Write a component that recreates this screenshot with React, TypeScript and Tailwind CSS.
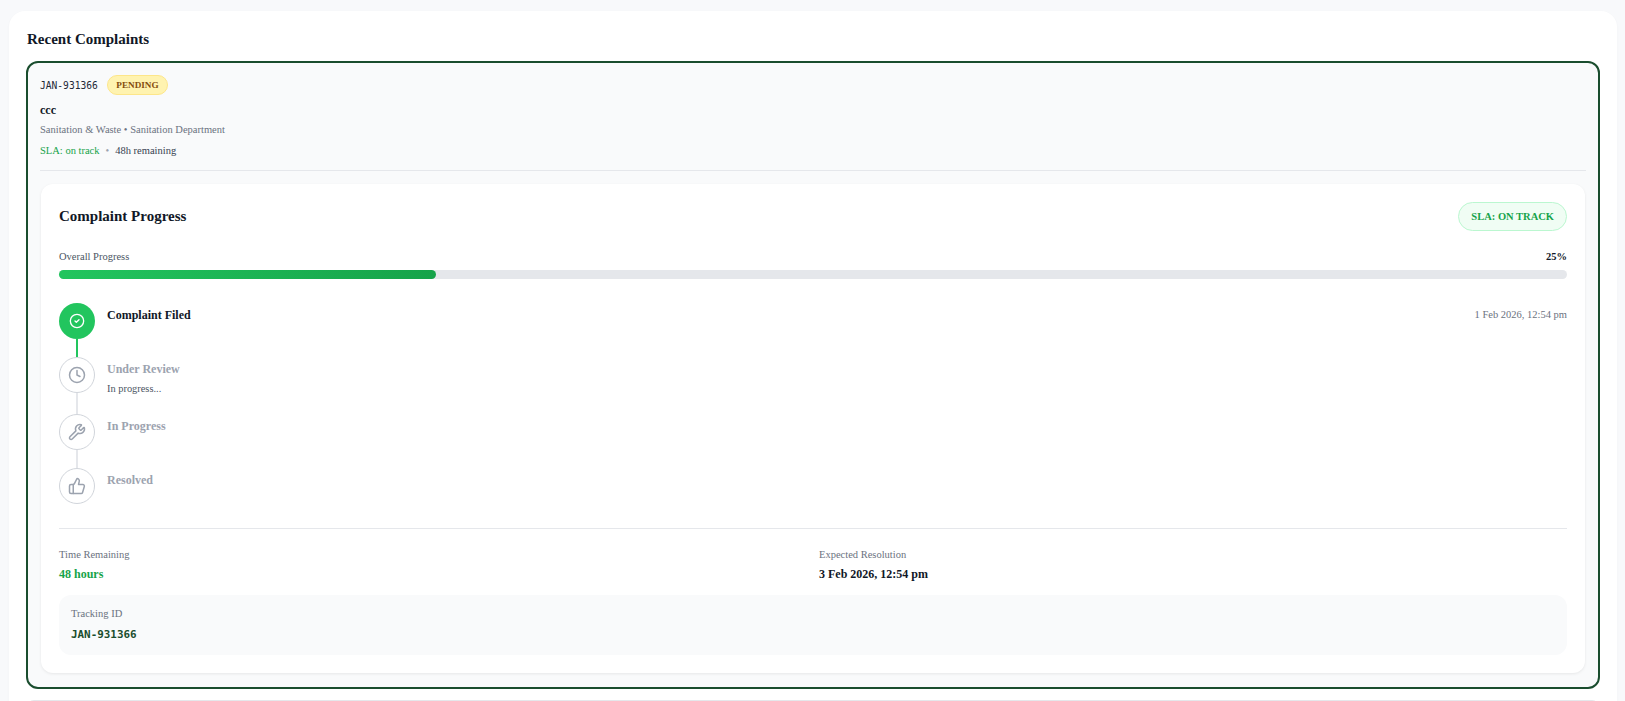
import { CircleCheck, Clock, Wrench, ThumbsUp } from "lucide-react";

export default function App() {
  return (
    <div className="h-[701px] overflow-hidden bg-[#f8f9fb] pt-[11px] pl-[9px] pr-2 text-[#111827] [font-family:'Liberation_Serif',serif]">
      <div className="rounded-2xl bg-white px-[17px] pt-[18px] shadow-[0_1px_3px_rgba(0,0,0,0.03)]">
        <h2 className="ml-px text-[15px] leading-5 font-bold text-[#111827]">Recent Complaints</h2>
        <div className="mt-3 rounded-xl border-2 border-[#1a4d2e] bg-[#f9fafb] px-[13px] pt-[12px] pb-[14px]">
          <div className="-mx-px">
            <div className="flex items-center gap-[9px]">
              <span className="relative top-px [font-family:'DejaVu_Sans_Mono',monospace] text-[9.6px] font-medium text-[#1f2937]">JAN-931366</span>
              <span className="flex h-5 items-center rounded-full border border-[#fde68a] bg-[#fff3b0] px-[8.5px] pt-px text-[9.2px] font-bold text-[#854d0e]">PENDING</span>
            </div>
            <div className="mt-[6px] text-xs leading-[18px] font-bold text-[#111827]">ccc</div>
            <div className="mt-[3px] text-[10.5px] leading-4 text-[#6b7280]">Sanitation &amp; Waste • Sanitation Department</div>
            <div className="mt-[5px] flex items-center gap-[6px] text-[10.5px] leading-4">
              <span className="text-[#16a34a]">SLA: on track</span>
              <span className="text-[#9ca3af]">•</span>
              <span className="text-[#374151]">48h remaining</span>
            </div>
            <div className="mt-[11px] h-px bg-[#e5e7eb]" />
          </div>
          <div className="mt-[13px] rounded-xl bg-white px-[18px] pt-[18px] pb-[18px] shadow-[0_1px_3px_rgba(0,0,0,0.08)]">
            <div className="flex items-center justify-between">
              <h3 className="text-[15px] font-bold text-[#111827]">Complaint Progress</h3>
              <span className="flex h-[29px] items-center rounded-full border border-[#bbf7d0] bg-[#f0fdf4] px-3 text-[10.5px] font-bold text-[#16a34a]">SLA: ON TRACK</span>
            </div>
            <div className="mt-[18px] flex items-center justify-between text-[10.5px] leading-4">
              <span className="text-[#4b5563]">Overall Progress</span>
              <span className="font-bold text-[#111827]">25%</span>
            </div>
            <div className="mt-[5px] h-[9px] rounded-full bg-[#e5e7eb]">
              <div className="h-full w-1/4 rounded-full bg-gradient-to-r from-[#22c55e] to-[#16a34a]" />
            </div>
            <div className="mt-[24px]">
              <div className="flex">
                <div className="flex w-9 flex-col items-center">
                  <div className="flex size-9 items-center justify-center rounded-full bg-[#22c55e] text-white">
                    <CircleCheck size={16} strokeWidth={2} />
                  </div>
                  <div className="h-[18px] w-0.5 bg-[#22c55e]" />
                </div>
                <div className="ml-3 flex flex-1 justify-between">
                  <span className="text-xs leading-6 font-bold text-[#111827]">Complaint Filed</span>
                  <span className="text-[10.5px] leading-6 text-[#6b7280]">1 Feb 2026, 12:54 pm</span>
                </div>
              </div>
              <div className="flex">
                <div className="flex w-9 flex-col items-center">
                  <div className="flex size-9 items-center justify-center rounded-full border border-[#d1d5db] bg-white text-[#9ca3af]">
                    <Clock size={18} strokeWidth={2} />
                  </div>
                  <div className="h-[21px] w-0.5 bg-[#e5e7eb]" />
                </div>
                <div className="ml-3 flex-1">
                  <div className="text-xs leading-6 font-bold text-[#9ca3af]">Under Review</div>
                  <div className="text-[10.4px] leading-4 text-[#4b5563]">In progress...</div>
                </div>
              </div>
              <div className="flex">
                <div className="flex w-9 flex-col items-center">
                  <div className="flex size-9 items-center justify-center rounded-full border border-[#d1d5db] bg-white text-[#9ca3af]">
                    <Wrench size={18} strokeWidth={2} />
                  </div>
                  <div className="h-[18px] w-0.5 bg-[#e5e7eb]" />
                </div>
                <div className="ml-3 flex-1 text-xs leading-6 font-bold text-[#9ca3af]">In Progress</div>
              </div>
              <div className="flex">
                <div className="flex size-9 items-center justify-center rounded-full border border-[#d1d5db] bg-white text-[#9ca3af]">
                  <ThumbsUp size={18} strokeWidth={2} />
                </div>
                <div className="ml-3 flex-1 text-xs leading-6 font-bold text-[#9ca3af]">Resolved</div>
              </div>
            </div>
            <div className="mt-[24px] h-px bg-[#e5e7eb]" />
            <div className="mt-[18px] grid grid-cols-2 gap-3">
              <div>
                <div className="text-[10.5px] leading-4 text-[#6b7280]">Time Remaining</div>
                <div className="mt-[2px] text-xs leading-[18px] font-bold text-[#16a34a]">48 hours</div>
              </div>
              <div>
                <div className="text-[10.5px] leading-4 text-[#6b7280]">Expected Resolution</div>
                <div className="mt-[2px] text-xs leading-[18px] font-bold text-[#111827]">3 Feb 2026, 12:54 pm</div>
              </div>
            </div>
            <div className="mt-3 h-[60px] rounded-xl bg-[#f9fafb] px-3 pt-[11px]">
              <div className="text-[10.5px] leading-4 text-[#6b7280]">Tracking ID</div>
              <div className="mt-1 [font-family:'DejaVu_Sans_Mono',monospace] text-[10.9px] leading-[18px] font-bold text-[#1a4d2e]">JAN-931366</div>
            </div>
          </div>
        </div>
        <div className="mt-[11px] h-10 rounded-lg border border-[#e5e7eb] bg-white" />
      </div>
    </div>
  );
}
